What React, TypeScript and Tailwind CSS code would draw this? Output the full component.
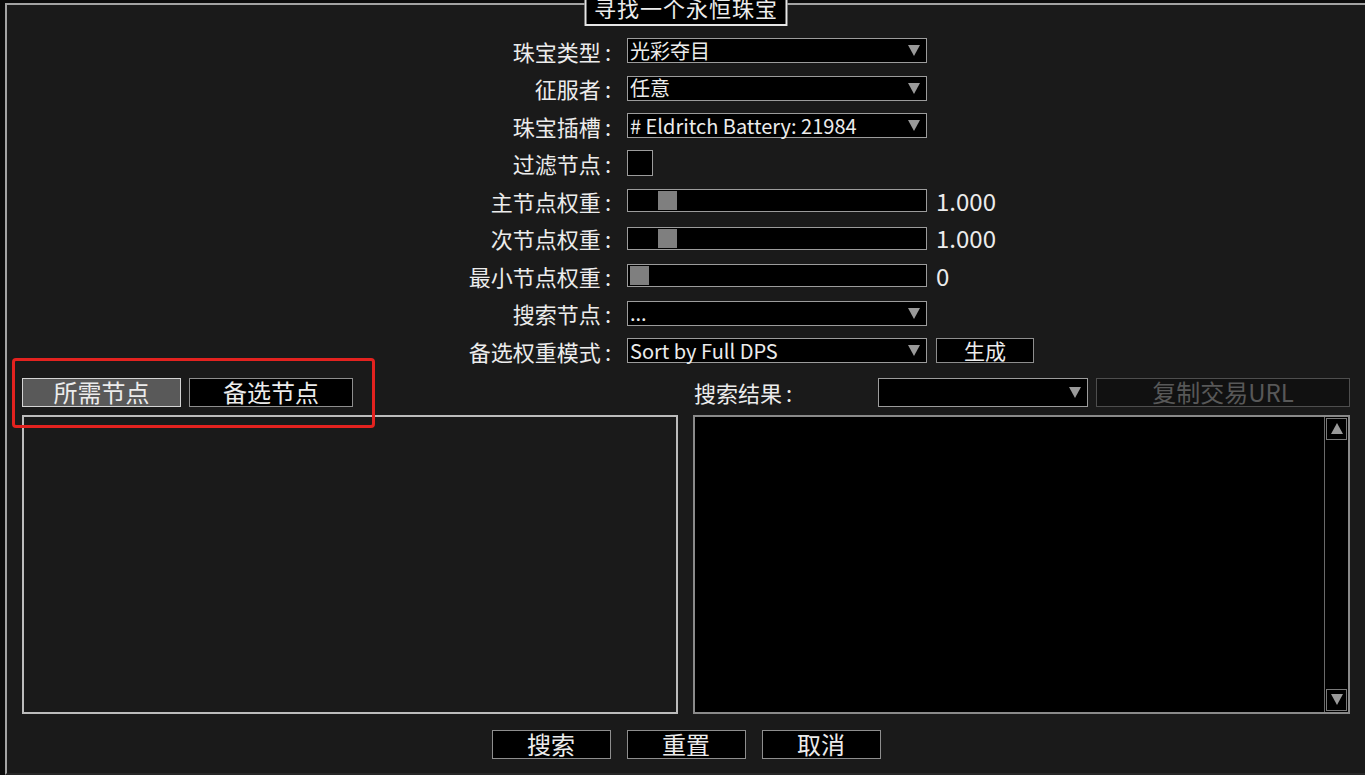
import React from "react";

const font = "font-['Noto_Sans_CJK_SC','Liberation_Sans',sans-serif]";

function Arrow({ up = false }: { up?: boolean }) {
  return (
    <svg width="14" height="13" viewBox="0 0 14 13" className="shrink-0">
      <polygon points={up ? "7,1 13,12 1,12" : "1,1 13,1 7,12"} fill="#9a9a9a" />
    </svg>
  );
}

function Dropdown({ value, w = "w-[300px]" }: { value: string; w?: string }) {
  return (
    <div className={`${w} h-[25px] bg-black border border-[#9c9c9c] flex items-center justify-between pl-[2px] pr-[5px]`}>
      <span className="text-[20px] leading-none text-[#ececec] whitespace-nowrap">{value}</span>
      <Arrow />
    </div>
  );
}

function Slider({ value, label }: { value: number; label: string }) {
  // knob sits on a 0..10 scale
  const left = 2 + (value / 10) * 278;
  return (
    <div className="flex items-center gap-[9px]">
      <div className="relative w-[300px] h-[23px] bg-black border border-[#9c9c9c]">
        <div className="absolute top-[1px] w-[19px] h-[19px] bg-[#7f7f7f]" style={{ left }} />
      </div>
      <span className="text-[24px] leading-none text-[#ececec]">{label}</span>
    </div>
  );
}

function Colon() {
  return <span className="ml-[4px] mr-[1px]">:</span>;
}

function Row({ label, children }: { label: string; children: React.ReactNode }) {
  return (
    <div className="h-[37.5px] flex items-center">
      <div className="w-[605px] text-right text-[22px] leading-none text-[#ececec] whitespace-nowrap">
        {label}
        <Colon />
      </div>
      <div className="ml-[15px] flex items-center gap-[9px]">{children}</div>
    </div>
  );
}

function Btn({
  children,
  w,
  size = "text-[24px]",
  active = false,
  disabled = false,
}: {
  children: React.ReactNode;
  w: string;
  size?: string;
  active?: boolean;
  disabled?: boolean;
}) {
  return (
    <div
      className={`${w} flex items-center justify-center ${size} leading-none border ${
        active
          ? "bg-[#595959] border-[#d4d4d4] text-[#ececec]"
          : disabled
          ? "bg-[#111111] border-[#4e4e4e] text-[#585858]"
          : "bg-black border-[#8e8e8e] text-[#ececec]"
      }`}
    >
      {children}
    </div>
  );
}

export default function App() {
  return (
    <div className={`w-[1365px] h-[775px] overflow-hidden bg-[#0c0c0c] ${font}`}>
      <div className="relative ml-[5px] mt-[3px] w-[1362px] h-[772px] bg-[#1a1a1a] border-2 border-b-[#262626] border-[#a3a3a3]">
        {/* Title tab over the top edge */}
        <div className="absolute left-1/2 -translate-x-1/2 top-[-17px] w-[203px] h-[38px] bg-black border-2 border-[#e6e6e6] flex items-end justify-center pb-[6px]">
          <span className="text-[22px] leading-none text-[#ececec] tracking-[1px]">寻找一个永恒珠宝</span>
        </div>

        <div className="pt-[27px]">
          <Row label="珠宝类型">
            <Dropdown value="光彩夺目" />
          </Row>
          <Row label="征服者">
            <Dropdown value="任意" />
          </Row>
          <Row label="珠宝插槽">
            <Dropdown value="# Eldritch Battery: 21984" />
          </Row>
          <Row label="过滤节点">
            <div className="w-[26px] h-[26px] bg-black border border-[#9c9c9c]" />
          </Row>
          <Row label="主节点权重">
            <Slider value={1} label="1.000" />
          </Row>
          <Row label="次节点权重">
            <Slider value={1} label="1.000" />
          </Row>
          <Row label="最小节点权重">
            <Slider value={0} label="0" />
          </Row>
          <Row label="搜索节点">
            <Dropdown value="..." />
          </Row>
          <Row label="备选权重模式">
            <Dropdown value="Sort by Full DPS" />
            <Btn w="w-[98px] h-[25px]" size="text-[21px]">
              生成
            </Btn>
          </Row>
        </div>

        {/* Lists */}
        <div className="mt-[8px] px-[15px] flex gap-[15px]">
          <div className="w-[657px] flex flex-col gap-[8px]">
            <div className="flex gap-[8px]">
              <Btn w="w-[159px] h-[29px]" active>
                所需节点
              </Btn>
              <Btn w="w-[164px] h-[29px]">备选节点</Btn>
            </div>
            <div className="h-[299px] border-2 border-[#bcbcbc]" />
          </div>
          <div className="w-[657px] flex flex-col gap-[8px]">
            <div className="flex items-center">
              <span className="w-[185px] text-[22px] leading-none text-[#ececec] pl-[1px] whitespace-nowrap">
                搜索结果
                <Colon />
              </span>
              <Dropdown value="" w="w-[210px] h-[29px]" />
              <div className="ml-[8px]">
                <Btn w="w-[254px] h-[29px]" disabled>
                  复制交易URL
                </Btn>
              </div>
            </div>
            <div className="h-[299px] bg-black border-2 border-[#8a8a8a] flex justify-end">
              <div className="w-[24px] border-l border-[#6a6a6a] flex flex-col justify-between p-[1px]">
                <div className="h-[22px] border border-[#7a7a7a] flex items-center justify-center">
                  <Arrow up />
                </div>
                <div className="h-[22px] border border-[#7a7a7a] flex items-center justify-center">
                  <Arrow />
                </div>
              </div>
            </div>
          </div>
        </div>

        {/* Bottom buttons */}
        <div className="mt-[16px] flex justify-center gap-[16px]">
          <Btn w="w-[119px] h-[29px]">搜索</Btn>
          <Btn w="w-[119px] h-[29px]">重置</Btn>
          <Btn w="w-[119px] h-[29px]">取消</Btn>
        </div>

        {/* Red highlight annotation */}
        <div className="absolute left-[5px] top-[353px] w-[363px] h-[70px] border-[3px] border-[#e3221f] rounded-[4px]" />
      </div>
    </div>
  );
}
